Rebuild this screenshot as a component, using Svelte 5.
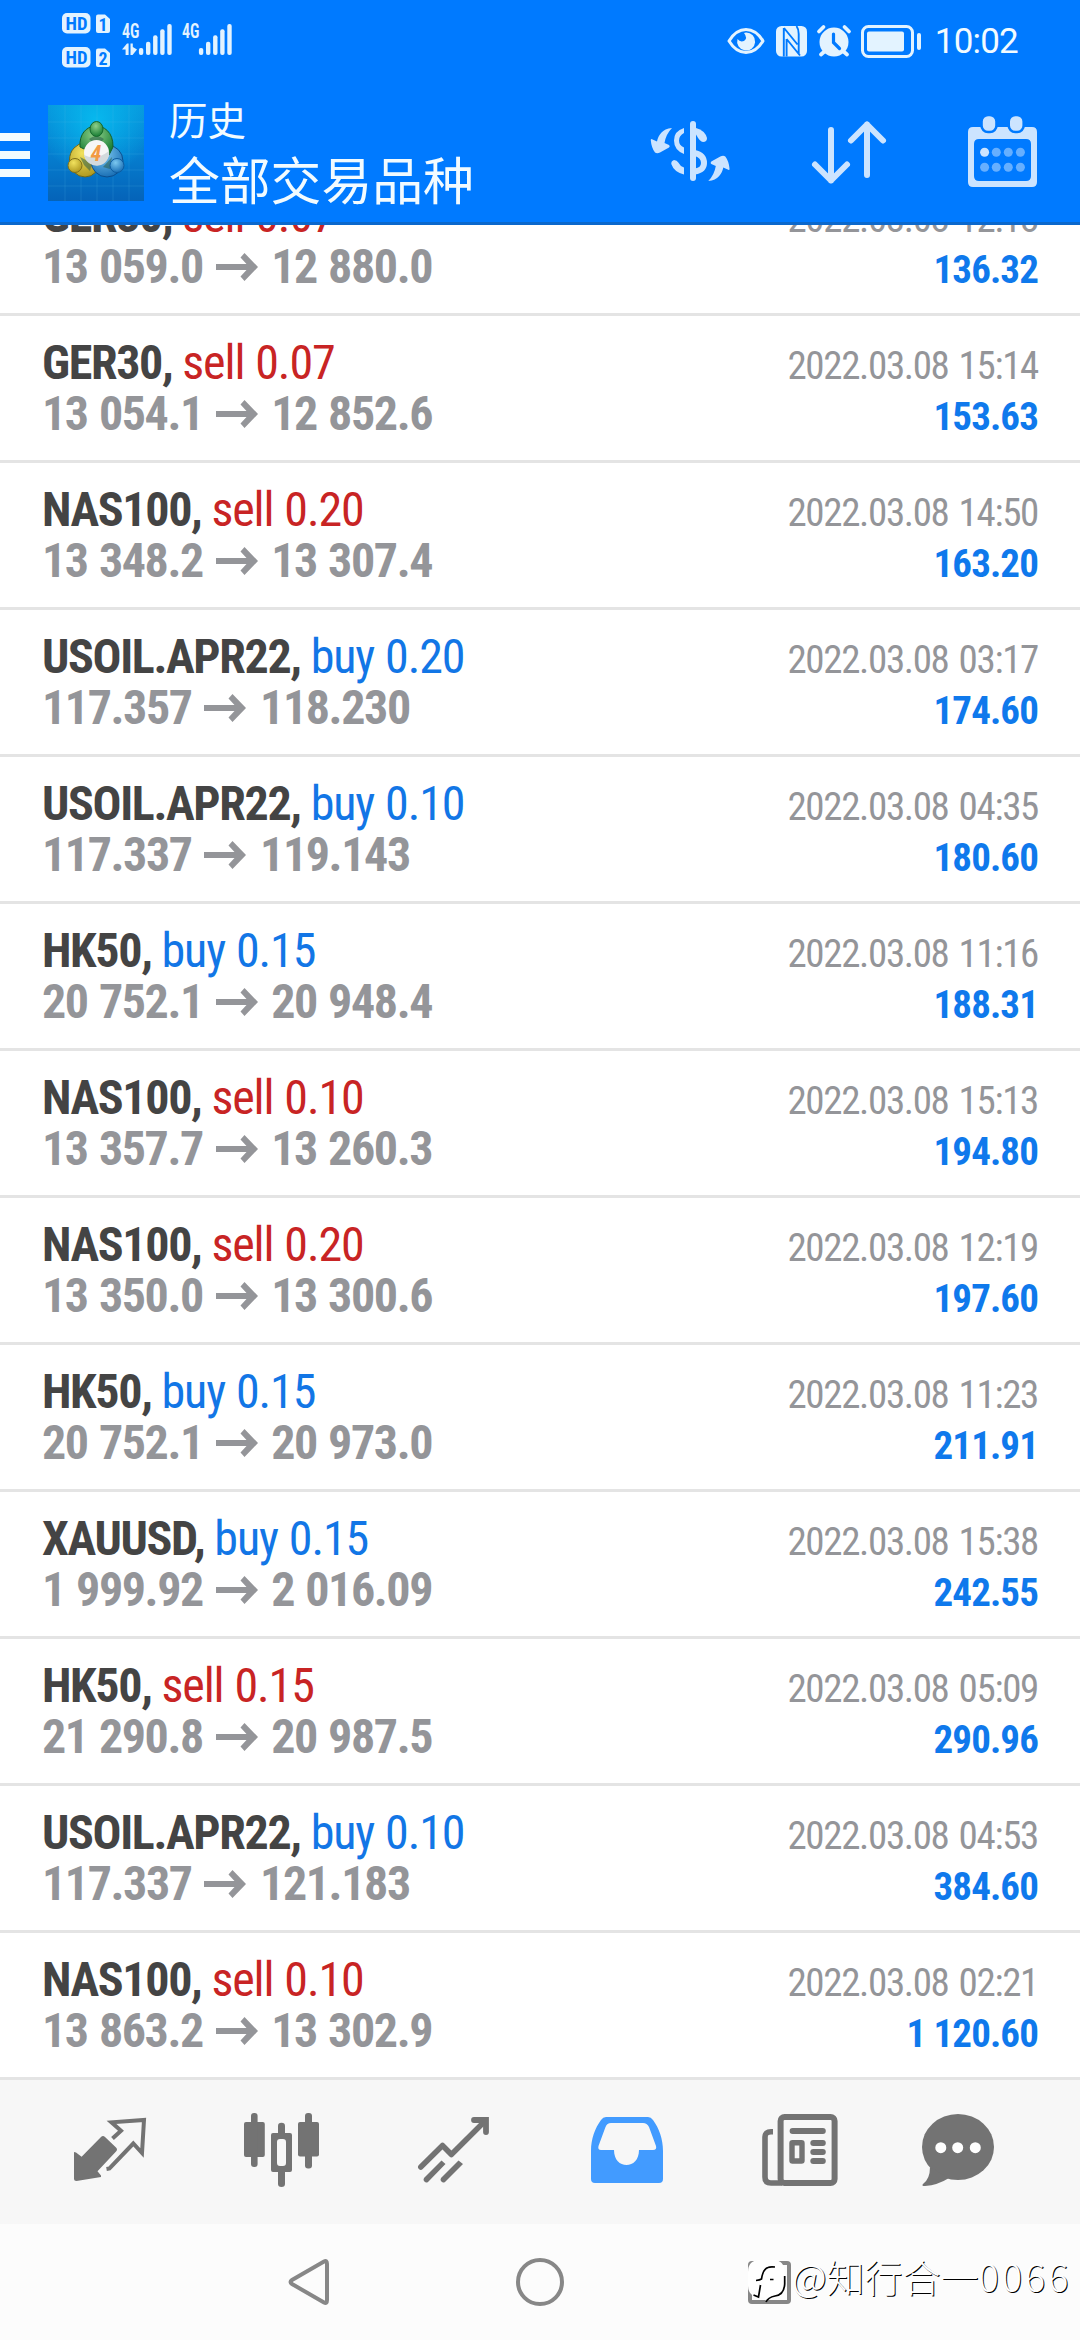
<script lang="ts">
  type Deal = {
    symbol: string;
    side: 'buy' | 'sell';
    volume: string;
    open: string;
    close: string;
    time: string;
    profit: string;
  };

  const deals: Deal[] = [
    { symbol: 'GER30', side: 'sell', volume: '0.07', open: '13 059.0', close: '12 880.0', time: '2022.03.08 12:18', profit: '136.32' },
    { symbol: 'GER30', side: 'sell', volume: '0.07', open: '13 054.1', close: '12 852.6', time: '2022.03.08 15:14', profit: '153.63' },
    { symbol: 'NAS100', side: 'sell', volume: '0.20', open: '13 348.2', close: '13 307.4', time: '2022.03.08 14:50', profit: '163.20' },
    { symbol: 'USOIL.APR22', side: 'buy', volume: '0.20', open: '117.357', close: '118.230', time: '2022.03.08 03:17', profit: '174.60' },
    { symbol: 'USOIL.APR22', side: 'buy', volume: '0.10', open: '117.337', close: '119.143', time: '2022.03.08 04:35', profit: '180.60' },
    { symbol: 'HK50', side: 'buy', volume: '0.15', open: '20 752.1', close: '20 948.4', time: '2022.03.08 11:16', profit: '188.31' },
    { symbol: 'NAS100', side: 'sell', volume: '0.10', open: '13 357.7', close: '13 260.3', time: '2022.03.08 15:13', profit: '194.80' },
    { symbol: 'NAS100', side: 'sell', volume: '0.20', open: '13 350.0', close: '13 300.6', time: '2022.03.08 12:19', profit: '197.60' },
    { symbol: 'HK50', side: 'buy', volume: '0.15', open: '20 752.1', close: '20 973.0', time: '2022.03.08 11:23', profit: '211.91' },
    { symbol: 'XAUUSD', side: 'buy', volume: '0.15', open: '1 999.92', close: '2 016.09', time: '2022.03.08 15:38', profit: '242.55' },
    { symbol: 'HK50', side: 'sell', volume: '0.15', open: '21 290.8', close: '20 987.5', time: '2022.03.08 05:09', profit: '290.96' },
    { symbol: 'USOIL.APR22', side: 'buy', volume: '0.10', open: '117.337', close: '121.183', time: '2022.03.08 04:53', profit: '384.60' },
    { symbol: 'NAS100', side: 'sell', volume: '0.10', open: '13 863.2', close: '13 302.9', time: '2022.03.08 02:21', profit: '1 120.60' },
  ];

  const dots = [16.6, 28.3, 40.3, 52.4];
  const barTops = [24, 17.7, 11.3, 5.3, 0];
</script>

{#snippet signal(arrows: boolean)}
  <svg class="signal" width="50" height="32" viewBox="0 0 50 32">
    <text x="0" y="14" font-size="19.5" font-weight="600" textLength="17.5" lengthAdjust="spacingAndGlyphs">4G</text>
    {#if arrows}
      <path d="M0 25.5 L5 19.5 H6.6 V31 H3.6 V25.5 Z M8.5 19.5 H10.8 V23 L15 25.5 L10.5 31 H8.5 Z" />
    {/if}
    {#each barTops as top, i}
      <rect x={16.9 + i * 7.1} y={top} width="4.4" height={31 - top} rx="2" />
    {/each}
  </svg>
{/snippet}

<div class="screen">
  <header>
    <div class="status">
      <svg class="hd" width="50" height="56" viewBox="0 0 50 56">
        {#each [0, 34] as y, i}
          <rect x="0" {y} width="28.5" height="20.5" rx="5" />
          <text x="3.5" y={y + 16.8} textLength="22" lengthAdjust="spacingAndGlyphs">HD</text>
          <path d="M36 {y + 1.5} H43 L48 {y + 6} V{y + 18} Q48 {y + 20} 46 {y + 20} H36 Q34 {y + 20} 34 {y + 18} V{y + 3.5} Q34 {y + 1.5} 36 {y + 1.5} Z" />
          <text x="36.5" y={y + 17.5} textLength="9" lengthAdjust="spacingAndGlyphs">{i + 1}</text>
        {/each}
      </svg>
      {@render signal(true)}
      {@render signal(false)}
      <div class="status-right">
        <svg class="eye" width="38" height="28" viewBox="0 0 38 28">
          <path d="M2 14 Q9 2.5 19 2.5 T36 14 Q29 25.5 19 25.5 T2 14 Z" fill="none" stroke="#e3f3ff" stroke-width="3" stroke-linejoin="round" />
          <path d="M19 5.5 A9 9 0 1 1 10.5 12 Q13 15.5 17 14 Q21 11 17 6 Z" />
        </svg>
        <svg width="31" height="31" viewBox="0 0 31 31">
          <rect width="31" height="30.5" rx="5.5" />
          <path d="M7.8 2 V30.5 M8 2 L21.5 18.5 M10.6 13 V30.5 M10.6 13 L24 29.5 M20.5 0 Q22.7 3 22.7 8 V28" fill="none" stroke="#007aff" stroke-width="1.9" />
        </svg>
        <svg width="34" height="32" viewBox="0 0 34 32">
          <circle cx="17" cy="17" r="14.5" />
          <path d="M2 6.5 L6.5 2 M32 6.5 L27.5 2 M4 29.5 L8 26 M30 29.5 L26 26" fill="none" stroke="#e3f3ff" stroke-width="3.8" stroke-linecap="round" />
          <path d="M3 9.5 L9.5 3 M31 9.5 L24.5 3" fill="none" stroke="#007aff" stroke-width="1.4" />
          <path d="M16.5 9 V17.5 L22.5 23.5" fill="none" stroke="#007aff" stroke-width="3.2" stroke-linecap="round" />
        </svg>
        <svg width="61" height="33" viewBox="0 0 61 33">
          <rect x="1.5" y="1.5" width="50" height="30" rx="6" fill="none" stroke="#e3f3ff" stroke-width="3" />
          <rect x="6" y="6.5" width="37" height="20" rx="2" />
          <rect x="56" y="8" width="4" height="17" rx="2" />
        </svg>
        <span class="clock">10:02</span>
      </div>
    </div>

    <div class="toolbar">
      <div class="menu"><i></i><i></i><i></i></div>
      <svg class="logo" width="96" height="96" viewBox="0 0 96 96">
        <defs>
          <linearGradient id="sky" x1="0" y1="0" x2="0" y2="1">
            <stop offset="0" stop-color="#0796dc" />
            <stop offset="0.5" stop-color="#057fd0" />
            <stop offset="1" stop-color="#0563b8" />
          </linearGradient>
          <radialGradient id="glow" cx="0.5" cy="0.15" r="0.6">
            <stop offset="0" stop-color="#07b8ee" />
            <stop offset="1" stop-color="#07b8ee" stop-opacity="0" />
          </radialGradient>
          <radialGradient id="green" cx="0.45" cy="0.3" r="0.7">
            <stop offset="0" stop-color="#8fd08a" />
            <stop offset="1" stop-color="#177d33" />
          </radialGradient>
          <radialGradient id="gold" cx="0.4" cy="0.3" r="0.8">
            <stop offset="0" stop-color="#f1e25e" />
            <stop offset="1" stop-color="#a89018" />
          </radialGradient>
          <radialGradient id="blue" cx="0.4" cy="0.3" r="0.8">
            <stop offset="0" stop-color="#7cc8f0" />
            <stop offset="1" stop-color="#0d64ae" />
          </radialGradient>
        </defs>
        <rect width="96" height="96" fill="url(#sky)" />
        <rect width="96" height="96" fill="url(#glow)" />
        <path d="M0 17 H96 M0 33 H96 M0 49 H96 M0 65 H96 M0 81 H96 M17 0 V96 M33 0 V96 M49 0 V96 M65 0 V96 M81 0 V96" stroke="#5cc4ee" stroke-opacity="0.18" />
        <ellipse cx="37" cy="55" rx="15.5" ry="17" fill="url(#gold)" stroke="#6d681c" />
        <ellipse cx="59" cy="56" rx="16" ry="16" fill="url(#blue)" stroke="#0b4f8f" />
        <path d="M32 42 C30 14 66 14 65 42 L61 50 L48 38 L36 44 Z" fill="url(#green)" stroke="#16602a" />
        <path d="M41 34 Q48.5 28 56 34 L52 38 H45 Z M32 52 L36 60 L42 66 L44 58 Z M64 52 L55 62 L62 64 Z" fill="#2b5d4a" opacity="0.55" />
        <ellipse cx="48.5" cy="24" rx="6.5" ry="7.5" fill="url(#green)" stroke="#17692e" />
        <circle cx="27" cy="60.5" r="7" fill="url(#gold)" stroke="#80701a" />
        <circle cx="69" cy="60.5" r="7" fill="url(#blue)" stroke="#0d5ca0" />
        <circle cx="48.5" cy="47.5" r="12.5" fill="#f6f6f6" />
        <path d="M36 50 Q48 56 61 46 A12.5 12.5 0 0 1 36 50 Z" fill="#d3dadd" />
        <text x="42.5" y="55.5" font-size="22" font-weight="700" font-style="italic" fill="#f29a45">4</text>
      </svg>
      <div class="titles">
        <span class="section">历史</span>
        <span class="filter">全部交易品种</span>
      </div>
      <div class="actions">
        <svg width="80" height="64" viewBox="0 0 80 64">
          <path id="swoosh" d="M22 8 C12 9 8.5 15 7 21.5 L1.5 19 Q0.5 19 0.8 20.5 Q1.5 28 5 32.5 Q7 34 10 32.5 L19 27.5 Q20.5 26 19 25 L14.5 23 Q16 14 22 8 Z" />
          <use href="#swoosh" transform="rotate(180 40.15 34.5)" />
          <rect x="40" y="1" width="6" height="60" rx="3" />
          <path d="M34 8 V13 Q29 15.5 29 20.5 Q29 25.5 34 27.5 V34 Q24 30 24 20.5 Q24 11 34 8 Z" />
          <path d="M34 54.5 V47.5 Q30 46 28.3 42.5 Q27 40 24 40 Q21 41 21.3 44 Q24 52 34 54.5 Z" />
          <path d="M46 8 Q55 10.5 57 18 Q57 22 53 22 Q50 22 46 14.5 Z" />
          <path d="M45 30 Q57 32.5 57 43 Q57 52.5 45 54.5 V48.5 Q51 47.5 51 43 Q51 38 45 36 Z" />
        </svg>
        <svg class="sort" width="74" height="64" viewBox="0 0 74 64">
          <path d="M19 10 V60.5 M3 44.5 L19 60.5 L35 44.5 M55 55 V4.5 M39 20.5 L55 4.5 L71 20.5" />
        </svg>
        <svg width="69" height="71" viewBox="0 0 69 71">
          <path fill-rule="evenodd" d="M5 11 H64 Q69 11 69 16 V66 Q69 71 64 71 H5 Q0 71 0 66 V16 Q0 11 5 11 Z M11 23 Q6 23 6 28 V60 Q6 65 11 65 H58 Q63 65 63 60 V28 Q63 23 58 23 Z" />
          <rect x="13.5" y="-1" width="15" height="17" rx="6.5" stroke="#007aff" stroke-width="2.6" />
          <rect x="40.7" y="-1" width="15" height="17" rx="6.5" stroke="#007aff" stroke-width="2.6" />
          {#each [36.3, 51.3] as y, row}
            {#each dots as x, col}
              <circle cx={x} cy={y} r="4.5" opacity={row + col === 0 ? 1 : 0.5} />
            {/each}
          {/each}
        </svg>
      </div>
    </div>
  </header>

  <main>
    {#each deals as deal}
      <div class="deal">
        <div class="left">
          <div class="line"><b>{deal.symbol},</b> <span class={deal.side}>{deal.side} {deal.volume}</span></div>
          <div class="line price">
            <span>{deal.open}</span>
            <svg width="42" height="28" viewBox="0 0 42 28" role="img" aria-label="to">
              <path d="M0 11 H30.5 L24.5 4.5 L28.5 0 L42 14 L28.5 28 L24.5 23.5 L30.5 17 H0 Z" />
            </svg>
            <span>{deal.close}</span>
          </div>
        </div>
        <div class="right">
          <div class="line time">{deal.time}</div>
          <div class="line profit">{deal.profit}</div>
        </div>
      </div>
    {/each}
  </main>

  <nav class="tabs">
    <svg width="72" height="64" viewBox="0 0 72 64">
      <path d="M0 34 L2 34.5 L7.6 38.7 L27 19 Q29 17 31 19 L42 29.5 Q44 31.5 42 33.5 L23.5 53.3 L27 57.5 V59 L2.5 63 Q0 63 0 60.5 Z" />
      <path class="stroke" stroke-width="4" d="M38.5 20.5 L47 12.7 L37.5 4.3 L70 2 L68 35 L59.3 25.5 L35.5 50.5 L32.5 51" />
    </svg>
    <svg class="candles" width="75" height="74" viewBox="0 0 75 74">
      <rect x="0" y="9" width="20.8" height="35" rx="2" />
      <rect x="7" y="0" width="6.6" height="54" rx="3" />
      <path fill-rule="evenodd" d="M29 20 H46 Q48 20 48 22 V57 Q48 59 46 59 H29 Q27 59 27 57 V22 Q27 20 29 20 Z M36 26 Q33 26 33 29 V50 Q33 53 36 53 H39 Q42 53 42 50 V29 Q42 26 39 26 Z" />
      <path d="M34 21 V13 Q34 9.7 37.5 9.7 Q41 9.7 41 13 V21 Z M34 58 V71 Q34 74 37.5 74 Q41 74 41 71 V58 Z" />
      <rect x="54" y="9" width="21" height="34.5" rx="2" />
      <rect x="61" y="0" width="7" height="55.5" rx="3" />
    </svg>
    <svg width="71" height="66" viewBox="0 0 71 66">
      <path class="stroke" stroke-width="5.5" stroke-linecap="round" stroke-linejoin="round" d="M2.8 50 L24.5 28.5 L33.4 37.5 L66 5" />
      <path class="stroke" stroke-width="5.8" stroke-linecap="round" d="M56 3 H68 V15" />
      <path d="M6 61 L23.5 43.5 L27.5 47 L10 65 A2.9 2.9 0 0 1 6 61 Z M23 61 L40.5 43.5 L45 47 L27 65 A2.9 2.9 0 0 1 23 61 Z" />
    </svg>
    <svg class="active" width="72" height="66" viewBox="0 0 72 66">
      <path fill-rule="evenodd" d="M15 0 H57 Q60 0 62 3 C68 11 72 22 72 34 V62 Q72 66 68 66 H4 Q0 66 0 62 V34 C0 22 4 11 10 3 Q12 0 15 0 Z M20 6 Q16 6 14.5 10 L7.5 29 Q6.5 33 10 33 H23 C23 43 29 48 35.5 48 C42 48 48 43 48 33 H62 Q66 33 65 29 L58 10 Q56 6 52 6 Z" />
    </svg>
    <svg width="76" height="72" viewBox="0 0 76 72">
      <rect class="stroke" stroke-width="6" x="18.6" y="3" width="54" height="66" rx="4" />
      <path class="stroke" stroke-width="5.6" d="M11 17.8 H9 Q3 17.8 3 23 V63 Q3 69 9 69 H20" />
      <rect x="27.6" y="14" width="36.2" height="6" rx="3" />
      <rect class="stroke" stroke-width="5.4" x="30" y="28.7" width="10" height="18.3" rx="0.5" />
      <rect x="48.3" y="26" width="15.5" height="6" rx="3" />
      <rect x="48.3" y="35" width="15.5" height="6" rx="3" />
      <rect x="48.3" y="44" width="15.5" height="6" rx="3" />
    </svg>
    <svg class="chat" width="72" height="72" viewBox="0 0 72 72">
      <ellipse cx="36" cy="33" rx="36" ry="33" />
      <path d="M8 53 Q8 65 1 70 Q-1 72 3 72 Q16 71 27 64 Z" />
      <g fill="#fff">
        <circle cx="18.8" cy="33.7" r="5.5" />
        <circle cx="35.7" cy="33.7" r="5.5" />
        <circle cx="53.3" cy="33.7" r="5.5" />
      </g>
    </svg>
  </nav>

  <footer>
    <svg width="41" height="46" viewBox="0 0 41 46">
      <path d="M36 2.5 Q39 1 39 5 V41 Q39 45 36 43.5 L4 25 Q1 23 4 21 Z" />
    </svg>
    <svg width="48" height="48" viewBox="0 0 48 48">
      <circle cx="24" cy="24" r="22" />
    </svg>
    <svg class="recent" width="43" height="43" viewBox="0 0 43 43">
      <rect x="2" y="2" width="39" height="39" rx="2" />
    </svg>
    <div class="watermark">
      <svg width="40" height="44" viewBox="0 0 40 44">
        <path d="M12 0 H25 Q36.5 0 36.5 12 V25 Q36 36 26 36.5 L18 41.5 L17 37 H12 Q0 37 0 25 V12 Q0 0 12 0 Z" fill="#fff" />
        <path d="M36.7 16 V24 Q36 35 27 36 Q20 37.5 18 42 M8 20.5 Q12 20 13.5 19 Q15 9 20 7.5 Q22 6.5 27 7 M22 19.5 H25.5 M12.5 25 L10.5 37 L5.5 35" fill="none" stroke="#000" stroke-width="1.7" />
      </svg>
      <span>@知行合一<span class="digits">0066</span></span>
    </div>
  </footer>
</div>

<style>
  :global(body) {
    margin: 0;
  }

  .screen {
    display: flex;
    flex-direction: column;
    width: 1080px;
    height: 2340px;
    overflow: hidden;
    background: #fff;
    font-family: 'Roboto Condensed', Roboto, 'Noto Sans CJK SC', sans-serif;
  }

  svg {
    display: block;
    flex: none;
    overflow: visible;
  }

  header {
    position: relative;
    z-index: 1;
    flex: none;
    box-sizing: border-box;
    height: 225px;
    border-bottom: 3px solid #0b68cc;
    background: #007aff;
    color: #f2fbff;
  }

  .status {
    display: flex;
    align-items: flex-start;
    box-sizing: border-box;
    height: 81px;
    padding: 13px 62px 0 62px;
    fill: #e3f3ff;
  }

  .hd text {
    fill: #007aff;
    font-size: 19px;
    font-weight: 700;
  }

  .signal {
    margin: 11px 0 0 10px;
  }

  .status-right {
    display: flex;
    align-items: center;
    gap: 10px;
    height: 56px;
    margin-left: auto;
  }

  .eye {
    margin-right: 1px;
  }

  .clock {
    margin: 2px 0 0 3px;
    font-family: Roboto, sans-serif;
    font-size: 35px;
    line-height: 40px;
    letter-spacing: -0.8px;
  }

  .toolbar {
    display: flex;
    align-items: flex-start;
    height: 141px;
  }

  .menu {
    display: flex;
    flex-direction: column;
    gap: 10px;
    width: 30px;
    padding-top: 52px;
  }

  .menu i {
    height: 8px;
    background: #f2fbff;
  }

  .logo {
    margin: 24px 25px 0 18px;
  }

  .titles {
    display: flex;
    flex-direction: column;
    font-family: 'Noto Sans CJK SC', sans-serif;
    white-space: nowrap;
  }

  .section {
    margin-top: 9px;
    font-size: 38.5px;
    line-height: 56px;
  }

  .filter {
    font-size: 50.8px;
    line-height: 64px;
  }

  .actions {
    display: flex;
    align-items: center;
    gap: 82px;
    height: 141px;
    margin: 0 43px 0 auto;
    fill: #cce4ff;
  }

  .sort {
    fill: none;
    stroke: #cce4ff;
    stroke-width: 6;
    stroke-linecap: round;
    stroke-linejoin: round;
  }

  main {
    flex: none;
    height: 1855px;
    overflow: hidden;
  }

  .deal {
    display: flex;
    justify-content: space-between;
    box-sizing: border-box;
    height: 147px;
    padding: 21px 42px 0;
    border-bottom: 3px solid #e4e4e4;
    font-stretch: 75%;
  }

  /* The list is scrolled, so its first row is partly under the header */
  .deal:first-child {
    margin-top: -56px;
  }

  .line {
    height: 51px;
    font-size: 48px;
    line-height: 51px;
    letter-spacing: -1.1px;
    white-space: nowrap;
    color: #949599;
  }

  .left b {
    letter-spacing: -1.35px;
    color: #444;
  }

  .left .buy,
  .left .sell {
    word-spacing: 1px;
  }

  .left .buy {
    color: #1276e6;
  }

  .left .sell {
    color: #c82424;
  }

  .price {
    font-weight: 700;
    letter-spacing: -1.4px;
  }

  .price span {
    word-spacing: 1.5px;
  }

  .price svg {
    display: inline-block;
    margin: 0 4px 0 3px;
    vertical-align: 2px;
    fill: #949599;
  }

  .right {
    padding-top: 4px;
    text-align: right;
  }

  .right .line {
    font-size: 39px;
  }

  .right .time {
    letter-spacing: -1.35px;
    word-spacing: 2.5px;
  }

  .right .profit {
    font-weight: 700;
    letter-spacing: -0.9px;
    color: #0f79ec;
  }

  .tabs {
    display: flex;
    align-items: center;
    gap: 99px;
    flex: none;
    box-sizing: border-box;
    height: 144px;
    padding: 0 0 5px 74px;
    background: #f7f7f7;
    fill: #737373;
  }

  .tabs .stroke {
    fill: none;
    stroke: #737373;
  }

  .tabs .candles {
    margin-left: -1px;
  }

  .tabs .active {
    margin-left: 3px;
    fill: #429bff;
  }

  .tabs .chat {
    margin-left: -15px;
  }

  footer {
    position: relative;
    display: flex;
    align-items: center;
    flex: 1;
    gap: 187px;
    padding-left: 288px;
    background: #fcfcfc;
  }

  footer > svg {
    fill: none;
    stroke: #878787;
    stroke-width: 4;
  }

  .recent {
    margin-left: -3px;
  }

  .watermark {
    position: absolute;
    top: 36px;
    left: 748px;
    display: flex;
    gap: 4px;
    font-family: 'Noto Sans CJK SC', sans-serif;
    font-size: 38px;
    font-weight: 300;
    line-height: 31px;
    color: #fff;
    text-shadow: 1px 1px 0 #000;
    white-space: nowrap;
  }

  .digits {
    letter-spacing: 2.8px;
  }
</style>
